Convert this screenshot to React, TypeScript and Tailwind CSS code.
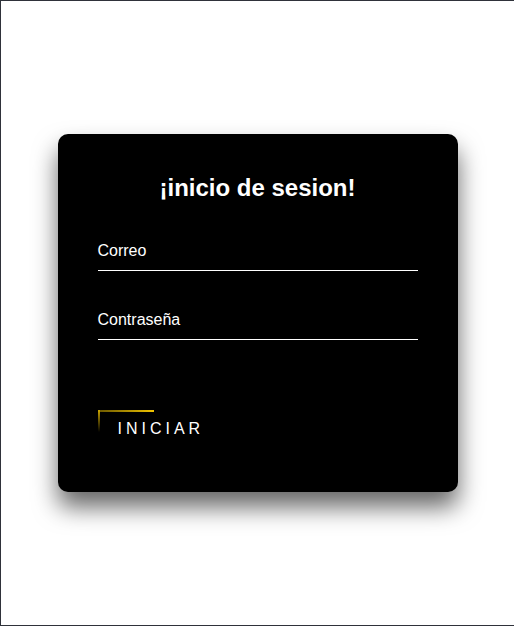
export default function App() {
  return (
    <div
      className="h-[626px] w-[514px] bg-white border-t border-l border-b border-[#2f323a] flex items-center justify-center"
      style={{ fontFamily: '"Liberation Sans", Arial, sans-serif' }}
    >
      <div className="w-[400px] h-[358px] bg-black rounded-[10px] shadow-[0_15px_25px_rgba(0,0,0,0.6)] px-[40px] pt-[40px]">
        <h2 className="text-white text-[24px] font-bold text-center leading-[27.6px] mb-[30px]">
          ¡inicio de sesion!
        </h2>

        <form>
          <div className="relative mb-[30px]">
            <input
              type="text"
              className="w-full py-[10px] text-[16px] leading-[18px] text-white bg-transparent border-b border-white outline-none"
            />
            <label className="absolute left-0 top-0 py-[10px] text-[16px] leading-[18px] text-white pointer-events-none">
              Correo
            </label>
          </div>

          <div className="relative mb-[30px]">
            <input
              type="password"
              className="w-full py-[10px] text-[16px] leading-[18px] text-white bg-transparent border-b border-white outline-none"
            />
            <label className="absolute left-0 top-0 py-[10px] text-[16px] leading-[18px] text-white pointer-events-none">
              Contraseña
            </label>
          </div>

          <div className="mt-[70px]">
            <a
              href="#"
              className="relative inline-block overflow-hidden px-[20px] py-[10px] text-[16px] leading-[18px] uppercase tracking-[4px] text-white"
            >
              {/* animated border pieces, frozen */}
              <span className="absolute left-0 top-0 h-[2px] w-[56px] bg-gradient-to-r from-[#6b5800] to-[#f2c500]" />
              <span className="absolute left-0 top-0 w-[2px] h-[22px] bg-gradient-to-b from-[#c9a300] to-transparent" />
              Iniciar
            </a>
          </div>
        </form>
      </div>
    </div>
  );
}
